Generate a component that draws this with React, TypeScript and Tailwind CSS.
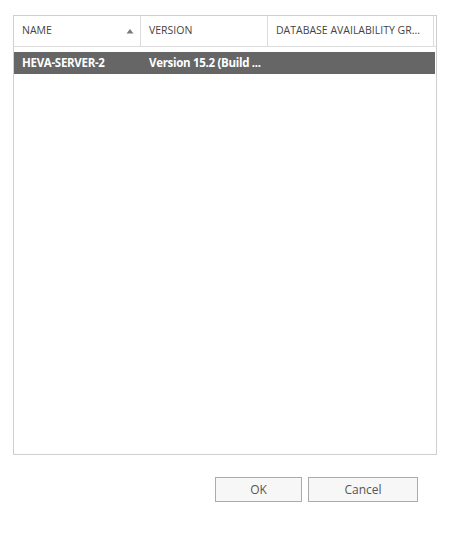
const font = { fontFamily: '"Open Sans", "Noto Sans", "Liberation Sans", sans-serif' };

type Server = { name: string; version: string; dag: string };

const servers: Server[] = [{ name: 'HEVA-SERVER-2', version: 'Version 15.2 (Build ...', dag: '' }];

function SortArrow() {
  return (
    <svg width="8" height="6" viewBox="0 0 8 6" className="shrink-0">
      <path d="M0.5 5.5 L4 1 L7.5 5.5 Z" fill="#7a7a7a" />
    </svg>
  );
}

export default function App() {
  return (
    <div className="w-[450px] h-[534px] bg-white pt-[15px] pl-[13px]" style={font}>
      <div className="w-[424px] h-[440px] border border-[#cfcfcf] flex flex-col">
        <div className="flex h-[31px] border-b border-[#dcdcdc] text-[10.5px] text-[#444] shrink-0">
          <div className="w-[127px] flex items-center justify-between pl-[8px] pr-[6px] border-r border-[#dcdcdc]">
            <span>NAME</span>
            <SortArrow />
          </div>
          <div className="w-[127px] flex items-center pl-[8px] border-r border-[#dcdcdc]">
            <span>VERSION</span>
          </div>
          <div className="flex-1 flex items-center pl-[8px] mr-[2px] border-r border-[#dcdcdc]">
            <span>DATABASE AVAILABILITY GR...</span>
          </div>
        </div>
        <div className="pt-[5px] pr-[1px]">
          {servers.map((s) => (
            <div key={s.name} className="flex h-[22px] items-center bg-[#666666] text-white font-bold text-[11.5px] tracking-[-0.3px]">
              <div className="w-[127px] pl-[8px] truncate">{s.name}</div>
              <div className="w-[127px] pl-[8px] truncate">{s.version}</div>
              <div className="flex-1 pl-[8px] truncate">{s.dag}</div>
            </div>
          ))}
        </div>
      </div>
      <div className="flex gap-[6px] mt-[22px] ml-[202px]">
        <button type="button" className="w-[87px] h-[25px] border border-[#ababab] bg-[#f7f7f7] text-[12px] text-[#555]">
          OK
        </button>
        <button type="button" className="w-[110px] h-[25px] border border-[#ababab] bg-[#f7f7f7] text-[12px] text-[#555]">
          Cancel
        </button>
      </div>
    </div>
  );
}
